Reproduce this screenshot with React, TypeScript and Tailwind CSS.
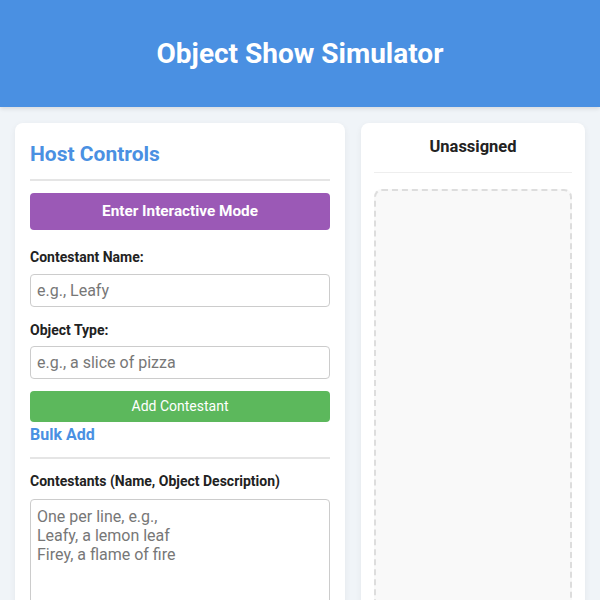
import React from 'react';

const App = () => {
  return (
    <div className="min-h-screen bg-[#f0f4f8] font-['Roboto',sans-serif] text-[#333]">
      <header className="h-[107px] bg-[#4a90e2] flex items-center justify-center shadow-[0_2px_4px_rgba(0,0,0,0.1)]">
        <h1 className="text-[28px] font-bold text-white">Object Show Simulator</h1>
      </header>

      <main className="flex gap-4 p-[15px] pt-4">
        <section className="w-[330px] shrink-0 bg-white rounded-lg shadow-[0_2px_6px_rgba(0,0,0,0.06)] p-[15px]">
          <h2 className="text-[21px] font-bold text-[#4a90e2] leading-[32px] pb-[9px] border-b-2 border-[#e5e5e5]">
            Host Controls
          </h2>
          <button className="mt-[12px] w-full h-[37px] rounded bg-[#9b59b6] text-white font-bold text-[15.3px]">
            Enter Interactive Mode
          </button>

          <label className="block mt-[17px] text-[14px] font-bold text-[#222]">Contestant Name:</label>
          <input
            className="mt-[6px] w-full h-[33px] border border-[#ccc] rounded px-[6px] text-[16px] placeholder:text-[#777]"
            placeholder="e.g., Leafy"
          />

          <label className="block mt-[13px] text-[14px] font-bold text-[#222]">Object Type:</label>
          <input
            className="mt-[5px] w-full h-[33px] border border-[#ccc] rounded px-[6px] text-[16px] placeholder:text-[#777]"
            placeholder="e.g., a slice of pizza"
          />

          <button className="mt-[12px] w-full h-[31px] rounded bg-[#5cb85c] text-white text-[14px]">
            Add Contestant
          </button>

          <h3 className="mt-[1px] text-[16px] font-bold text-[#4a90e2] leading-[24px] pb-[10px] border-b-2 border-[#e5e5e5]">
            Bulk Add
          </h3>

          <label className="block mt-[12px] text-[14px] font-bold text-[#222]">
            Contestants (Name, Object Description)
          </label>
          <textarea
            className="mt-[7px] w-full h-[150px] border border-[#ccc] rounded px-[6px] pt-[7px] pb-[6px] text-[16px] leading-[19px] resize-none placeholder:text-[#777]"
            placeholder={'One per line, e.g.,\nLeafy, a lemon leaf\nFirey, a flame of fire'}
          />
        </section>

        <section className="flex-1 bg-white rounded-lg shadow-[0_2px_6px_rgba(0,0,0,0.06)] px-[13px] pt-[12px] pb-[15px]">
          <h2 className="text-center text-[16.5px] font-bold text-[#222] pb-[12px] border-b border-[#eee]">
            Unassigned
          </h2>
          <div className="mt-4 h-[450px] bg-[#f9f9f9] border-2 border-dashed border-[#ddd] rounded-lg" />
        </section>
      </main>
    </div>
  );
};

export default App;
